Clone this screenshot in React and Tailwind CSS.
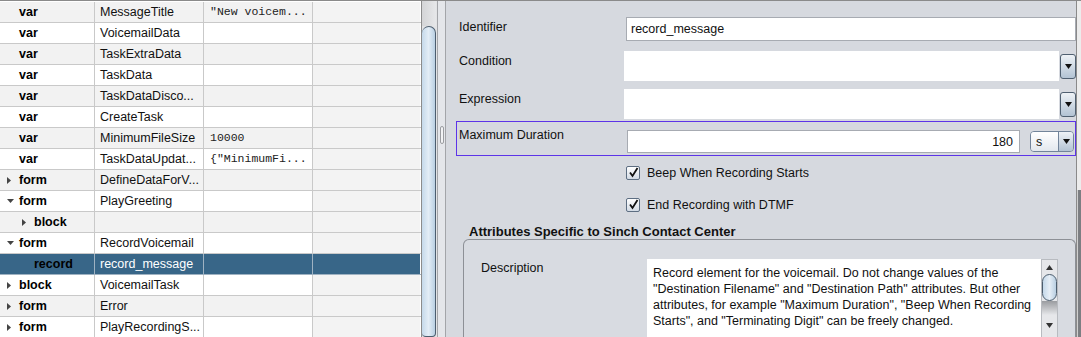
import React from 'react';

const rows = [
  { t: 'var', n: 'MessageTitle', v: '"New voicem...' },
  { t: 'var', n: 'VoicemailData' },
  { t: 'var', n: 'TaskExtraData' },
  { t: 'var', n: 'TaskData' },
  { t: 'var', n: 'TaskDataDisco...' },
  { t: 'var', n: 'CreateTask' },
  { t: 'var', n: 'MinimumFileSize', v: '10000' },
  { t: 'var', n: 'TaskDataUpdat...', v: '{"MinimumFi...' },
  { t: 'form', n: 'DefineDataForV...', a: 'right' },
  { t: 'form', n: 'PlayGreeting', a: 'down' },
  { t: 'block', n: '', a: 'right', d: 1 },
  { t: 'form', n: 'RecordVoicemail', a: 'down' },
  { t: 'record', n: 'record_message', d: 1, sel: true },
  { t: 'block', n: 'VoicemailTask', a: 'right' },
  { t: 'form', n: 'Error', a: 'right' },
  { t: 'form', n: 'PlayRecordingS...', a: 'right' },
];

function Arrow({ dir }) {
  if (dir === 'down') {
    return (
      <svg width="7" height="4" viewBox="0 0 7 4" className="shrink-0">
        <path d="M0 0 H7 L3.5 4 Z" fill="#444" />
      </svg>
    );
  }
  return (
    <svg width="4" height="7" viewBox="0 0 4 7" className="shrink-0">
      <path d="M0 0 V7 L4 3.5 Z" fill="#444" />
    </svg>
  );
}

function DropButton({ className = '' }) {
  return (
    <div className={`flex items-center justify-center rounded-[3px] border border-[#4f5f70] bg-gradient-to-b from-[#eef2f6] to-[#b3c3d3] ${className}`}>
      <svg width="7" height="5" viewBox="0 0 7 5">
        <path d="M0 0 H7 L3.5 5 Z" fill="#111" />
      </svg>
    </div>
  );
}

function Check({ label }) {
  return (
    <div className="flex items-center h-full">
      <div className="w-[14px] h-[14px] rounded-[2px] border border-[#5d6e82] bg-gradient-to-b from-white to-[#d3dbe5] flex items-center justify-center">
        <svg width="11" height="11" viewBox="0 0 11 11">
          <path d="M2 5.5 L4.5 9 L9.5 1" stroke="#111" strokeWidth="1.8" fill="none" />
        </svg>
      </div>
      <span className="ml-[7px] text-[12.5px] text-[#111]">{label}</span>
    </div>
  );
}

function Row({ r, i }) {
  const grey = i % 2 === 0;
  const bg = r.sel ? 'bg-[#386688]' : grey ? 'bg-[#f2f2f2]' : 'bg-white';
  const last = r.sel ? 'bg-[#386688]' : 'bg-[#f3f3f3]';
  const line = r.sel ? 'border-[#9fb2c2]' : 'border-[#c9c9c9]';
  return (
    <div className={`flex h-[21px] border-b ${line}`}>
      <div className={`w-[95px] border-r ${line} ${bg} flex items-center`}>
        <div className={`flex items-center ${r.d ? 'pl-[22px]' : 'pl-[7px]'}`}>
          <div className="w-[12px] flex items-center">{r.a && <Arrow dir={r.a} />}</div>
          <span className="font-bold text-[12.5px] text-black">{r.t}</span>
        </div>
      </div>
      <div className={`w-[109px] border-r ${line} ${bg} flex items-center pl-[5px]`}>
        <span className={`text-[12.5px] whitespace-nowrap ${r.sel ? 'text-white' : 'text-[#111]'}`}>{r.n}</span>
      </div>
      <div className={`w-[109px] border-r ${line} ${bg} flex items-center pl-[6px]`}>
        <span className="font-['Liberation_Mono',monospace] text-[11.5px] whitespace-nowrap text-[#222]">{r.v}</span>
      </div>
      <div className={`w-[107px] ${last}`} />
    </div>
  );
}

export default function App() {
  return (
    <div className="w-[1081px] h-[337px] overflow-hidden flex border-t border-[#8a8a8a] font-['Liberation_Sans',Arial,sans-serif] text-[12.5px] leading-[14px]">
      {/* table */}
      <div className="w-[421px] bg-white pt-[1px] overflow-hidden">
        {rows.map((r, i) => (
          <Row key={i} r={r} i={i} />
        ))}
      </div>

      {/* table scrollbar */}
      <div className="w-[16px] border-l border-[#8c8c8c] bg-[#e2e3e5] flex flex-col pr-[1px]">
        <div className="h-[25px] bg-gradient-to-r from-[#d4d5d7] to-[#e6e7e9]" />
        <div className="flex-1 rounded-t-[9px] rounded-b-[5px] border border-l-0 border-[#4c5d6e] bg-gradient-to-r from-[#c5d9ea] via-[#e3edf6] to-[#b9cfe2]" />
      </div>

      {/* splitter */}
      <div className="w-[9px] border-l border-r border-[#a3a5a9] bg-[#e4e6ea] flex justify-center pt-[125px]">
        <div className="w-[4px] h-[18px] rounded-[2px] border border-[#9a9ca0] bg-[#f2f3f5]" />
      </div>

      {/* properties panel */}
      <div className="w-[630px] bg-[#d6d9df] pl-[13px] text-[#111] overflow-hidden">
        <div className="h-[16px]" />
        <div className="flex h-[24px]">
          <div className="w-[167px] pt-[3px]">Identifier</div>
          <div className="w-[450px] bg-white border border-[#a7abb2] flex items-center pl-[4px]">record_message</div>
        </div>

        <div className="flex h-[30px] mt-[10px]">
          <div className="w-[166px] pt-[3px]">Condition</div>
          <div className="w-[436px] bg-white" />
          <DropButton className="w-[16px] h-[25px] mt-[3px] ml-[1px]" />
        </div>

        <div className="flex h-[30px] mt-[8px]">
          <div className="w-[166px] pt-[3px]">Expression</div>
          <div className="w-[436px] bg-white" />
          <DropButton className="w-[16px] h-[25px] mt-[3px] ml-[1px]" />
        </div>

        <div className="flex h-[35px] mt-[2px] -ml-[3px] w-[620px] border border-[#5d34e8]">
          <div className="w-[170px] pl-[2px] pt-[6px]">Maximum Duration</div>
          <div className="w-[393px] h-[23px] mt-[8px] bg-white border border-[#a7abb2] flex items-center justify-end pr-[6px]">180</div>
          <div className="w-[44px] h-[21px] mt-[9px] ml-[10px] rounded-[4px] border border-[#72849a] flex overflow-hidden">
            <div className="flex-1 bg-gradient-to-b from-white to-[#e3e8ee] flex items-center pl-[5px]">s</div>
            <div className="w-[15px] border-l border-[#72849a] bg-gradient-to-b from-[#eef2f6] to-[#b3c3d3] flex items-center justify-center">
              <svg width="7" height="5" viewBox="0 0 7 5">
                <path d="M0 0 H7 L3.5 5 Z" fill="#111" />
              </svg>
            </div>
          </div>
        </div>

        <div className="h-[33px] pl-[167px]">
          <Check label="Beep When Recording Starts" />
        </div>
        <div className="h-[31px] pl-[167px]">
          <Check label="End Recording with DTMF" />
        </div>

        <div className="h-[19px] pl-[10px] pt-[5px] font-bold text-[13px] leading-[14px]">Attributes Specific to Sinch Contact Center</div>

        <div className="ml-[4px] w-[613px] h-[110px] border border-b-0 border-[#8d9096] rounded-t-[6px] bg-[#d8dbe1] flex pt-[19px] pl-[17px]">
          <div className="w-[166px] pt-[2px]">Description</div>
          <div className="w-[394px] bg-white pt-[6px] pl-[6px] leading-[16px] text-[12.5px] text-[#111]">
            <div className="whitespace-nowrap">Record element for the voicemail. Do not change values of the</div>
            <div className="whitespace-nowrap">"Destination Filename" and "Destination Path" attributes. But other</div>
            <div className="whitespace-nowrap">attributes, for example "Maximum Duration", "Beep When Recording</div>
            <div className="whitespace-nowrap">Starts", and "Terminating Digit" can be freely changed.</div>
          </div>
          <div className="w-[17px] bg-[#e6e7ea] border border-[#b8bbc0] flex flex-col items-center">
            <svg width="7" height="5" viewBox="0 0 7 5" className="mt-[5px]">
              <path d="M0 5 H7 L3.5 0 Z" fill="#333" />
            </svg>
            <div className="w-[15px] h-[27px] mt-[4px] rounded-full border border-[#4c5d6e] bg-gradient-to-r from-[#c5d9ea] via-[#e6eef6] to-[#b9cfe2]" />
            <div className="w-[15px] h-[14px] bg-gradient-to-b from-[#9a9ca0] to-[#e6e7ea]" />
            <svg width="7" height="5" viewBox="0 0 7 5" className="mt-[8px]">
              <path d="M0 0 H7 L3.5 5 Z" fill="#333" />
            </svg>
          </div>
        </div>
      </div>

      {/* right edge */}
      <div className="w-[1px] bg-[#8a8a8a]" />
      <div className="w-[4px] flex flex-col">
        <div className="h-[189px] bg-[#ececec]" />
        <div className="flex-1 bg-[#7c7e82] border-l border-[#d0d0d0]" />
      </div>
    </div>
  );
}
